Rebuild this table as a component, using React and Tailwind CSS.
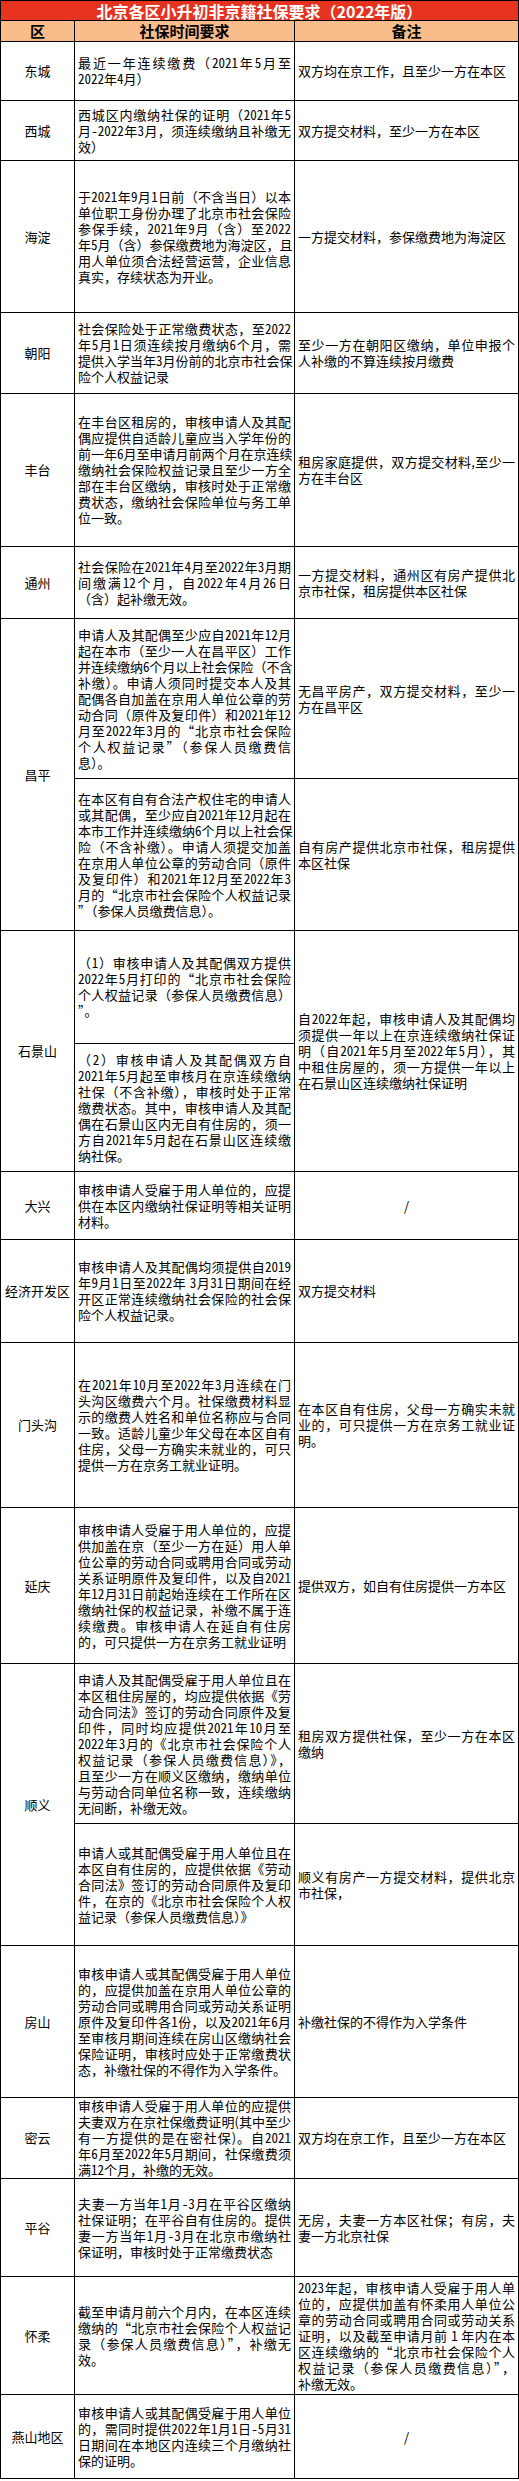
import React from "react";

// half-width digits/latin, like the original's 宋体 numbers; CJK punctuation stays full width
const half = (t) =>
  t.split(/([0-9A-Za-z\-.]+)/).map((p, i) =>
    /^[0-9A-Za-z\-.]+$/.test(p) ? (
      <span key={i} className="[font-feature-settings:'hwid']">{p}</span>
    ) : (
      p
    )
  );

// one line per array item; every line but the last is spread to the full cell width
const T = ({ l }) => (
  <div>
    {l.map((t, i) => (
      <div
        key={i}
        className={
          i < l.length - 1
            ? "whitespace-nowrap text-justify [text-align-last:justify]"
            : "whitespace-nowrap"
        }
      >
        {half(t)}
      </div>
    ))}
  </div>
);

const td = "border border-black px-[3px] py-0 align-middle text-[13px] leading-[16px] text-black overflow-hidden";
const name = "border border-black align-middle text-center text-[13px] leading-[16px] text-black";
const slash = "border border-black align-middle text-center text-[13px] text-black";

const App = () => {
  return (
    <div className="min-h-[2481px] bg-white font-['Noto_Sans_CJK_SC','Noto_Sans',sans-serif]">
      <table className="w-[518px] border-collapse table-fixed">
        <colgroup>
          <col className="w-[74px]" />
          <col className="w-[220px]" />
          <col className="w-[224px]" />
        </colgroup>
        <tbody>
          <tr className="h-[20px]">
            <td colSpan={3} className="border border-black bg-[#e6331f] text-center text-[16px] leading-[18px] font-bold text-white">
              北京各区小升初非京籍社保要求（2022年版）
            </td>
          </tr>
          <tr className="h-[21px] bg-[#f8bd8b]">
            <td className="border border-black text-center text-[15px] leading-[18px] font-bold text-black">区</td>
            <td className="border border-black text-center text-[15px] leading-[18px] font-bold text-black">社保时间要求</td>
            <td className="border border-black text-center text-[15px] leading-[18px] font-bold text-black">备注</td>
          </tr>

          <tr className="h-[59px]">
            <td className={name}>东城</td>
            <td className={td}><T l={["最近一年连续缴费（2021年5月至", "2022年4月）"]} /></td>
            <td className={td}><T l={["双方均在京工作，且至少一方在本区"]} /></td>
          </tr>

          <tr className="h-[60px]">
            <td className={name}>西城</td>
            <td className={td}><T l={["西城区内缴纳社保的证明（2021年5", "月-2022年3月，须连续缴纳且补缴无", "效）"]} /></td>
            <td className={td}><T l={["双方提交材料，至少一方在本区"]} /></td>
          </tr>

          <tr className="h-[152px]">
            <td className={name}>海淀</td>
            <td className={td}>
              <T
                l={[
                  "于2021年9月1日前（不含当日）以本",
                  "单位职工身份办理了北京市社会保险",
                  "参保手续，2021年9月（含）至2022",
                  "年5月（含）参保缴费地为海淀区，且",
                  "用人单位须合法经营运营，企业信息",
                  "真实，存续状态为开业。",
                ]}
              />
            </td>
            <td className={td}><T l={["一方提交材料，参保缴费地为海淀区"]} /></td>
          </tr>

          <tr className="h-[81px]">
            <td className={name}>朝阳</td>
            <td className={td}>
              <T
                l={[
                  "社会保险处于正常缴费状态，至2022",
                  "年5月1日须连续按月缴纳6个月，需",
                  "提供入学当年3月份前的北京市社会保",
                  "险个人权益记录",
                ]}
              />
            </td>
            <td className={td}><T l={["至少一方在朝阳区缴纳，单位申报个", "人补缴的不算连续按月缴费"]} /></td>
          </tr>

          <tr className="h-[153px]">
            <td className={name}>丰台</td>
            <td className={td}>
              <T
                l={[
                  "在丰台区租房的，审核申请人及其配",
                  "偶应提供自适龄儿童应当入学年份的",
                  "前一年6月至申请月前两个月在京连续",
                  "缴纳社会保险权益记录且至少一方全",
                  "部在丰台区缴纳，审核时处于正常缴",
                  "费状态，缴纳社会保险单位与务工单",
                  "位一致。",
                ]}
              />
            </td>
            <td className={td}><T l={["租房家庭提供，双方提交材料,至少一", "方在丰台区"]} /></td>
          </tr>

          <tr className="h-[72px]">
            <td className={name}>通州</td>
            <td className={td}>
              <T l={["社会保险在2021年4月至2022年3月期", "间缴满12个月，自2022年4月26日", "（含）起补缴无效。"]} />
            </td>
            <td className={td}><T l={["一方提交材料，通州区有房产提供北", "京市社保，租房提供本区社保"]} /></td>
          </tr>

          <tr className="h-[160px]">
            <td rowSpan={2} className={name}>昌平</td>
            <td className={td}>
              <T
                l={[
                  "申请人及其配偶至少应自2021年12月",
                  "起在本市（至少一人在昌平区）工作",
                  "并连续缴纳6个月以上社会保险（不含",
                  "补缴）。申请人须同时提交本人及其",
                  "配偶各自加盖在京用人单位公章的劳",
                  "动合同（原件及复印件）和2021年12",
                  "月至2022年3月的“北京市社会保险",
                  "个人权益记录”（参保人员缴费信",
                  "息）。",
                ]}
              />
            </td>
            <td className={td}><T l={["无昌平房产，双方提交材料，至少一", "方在昌平区"]} /></td>
          </tr>
          <tr className="h-[152px]">
            <td className={td}>
              <T
                l={[
                  "在本区有自有合法产权住宅的申请人",
                  "或其配偶，至少应自2021年12月起在",
                  "本市工作并连续缴纳6个月以上社会保",
                  "险（不含补缴）。申请人须提交加盖",
                  "在京用人单位公章的劳动合同（原件",
                  "及复印件）和2021年12月至2022年3",
                  "月的“北京市社会保险个人权益记录",
                  "”（参保人员缴费信息）。",
                ]}
              />
            </td>
            <td className={td}><T l={["自有房产提供北京市社保，租房提供", "本区社保"]} /></td>
          </tr>

          <tr className="h-[113px]">
            <td rowSpan={2} className={name}>石景山</td>
            <td className={td}>
              <T
                l={[
                  "（1）审核申请人及其配偶双方提供",
                  "2022年5月打印的“北京市社会保险",
                  "个人权益记录（参保人员缴费信息）",
                  "”。",
                ]}
              />
            </td>
            <td rowSpan={2} className={td}>
              <T
                l={[
                  "自2022年起，审核申请人及其配偶均",
                  "须提供一年以上在京连续缴纳社保证",
                  "明（自2021年5月至2022年5月），其",
                  "中租住房屋的，须一方提供一年以上",
                  "在石景山区连续缴纳社保证明",
                ]}
              />
            </td>
          </tr>
          <tr className="h-[128px]">
            <td className={td}>
              <T
                l={[
                  "（2）审核申请人及其配偶双方自",
                  "2021年5月起至审核月在京连续缴纳",
                  "社保（不含补缴），审核时处于正常",
                  "缴费状态。其中，审核申请人及其配",
                  "偶在石景山区内无自有住房的，须一",
                  "方自2021年5月起在石景山区连续缴",
                  "纳社保。",
                ]}
              />
            </td>
          </tr>

          <tr className="h-[68px]">
            <td className={name}>大兴</td>
            <td className={td}>
              <T l={["审核申请人受雇于用人单位的，应提", "供在本区内缴纳社保证明等相关证明", "材料。"]} />
            </td>
            <td className={slash}>/</td>
          </tr>

          <tr className="h-[103px]">
            <td className={name}>经济开发区</td>
            <td className={td}>
              <T
                l={[
                  "审核申请人及其配偶均须提供自2019",
                  "年9月1日至2022年 3月31日期间在经",
                  "开区正常连续缴纳社会保险的社会保",
                  "险个人权益记录。",
                ]}
              />
            </td>
            <td className={td}><T l={["双方提交材料"]} /></td>
          </tr>

          <tr className="h-[165px]">
            <td className={name}>门头沟</td>
            <td className={td}>
              <T
                l={[
                  "在2021年10月至2022年3月连续在门",
                  "头沟区缴费六个月。社保缴费材料显",
                  "示的缴费人姓名和单位名称应与合同",
                  "一致。适龄儿童少年父母在本区自有",
                  "住房，父母一方确实未就业的，可只",
                  "提供一方在京务工就业证明。",
                ]}
              />
            </td>
            <td className={td}>
              <T l={["在本区自有住房，父母一方确实未就", "业的，可只提供一方在京务工就业证", "明。"]} />
            </td>
          </tr>

          <tr className="h-[156px]">
            <td className={name}>延庆</td>
            <td className={td}>
              <T
                l={[
                  "审核申请人受雇于用人单位的，应提",
                  "供加盖在京（至少一方在延）用人单",
                  "位公章的劳动合同或聘用合同或劳动",
                  "关系证明原件及复印件，以及自2021",
                  "年12月31日前起始连续在工作所在区",
                  "缴纳社保的权益记录，补缴不属于连",
                  "续缴费。审核申请人在延自有住房",
                  "的，可只提供一方在京务工就业证明",
                ]}
              />
            </td>
            <td className={td}><T l={["提供双方，如自有住房提供一方本区"]} /></td>
          </tr>

          <tr className="h-[160px]">
            <td rowSpan={2} className={name}>顺义</td>
            <td className={td}>
              <T
                l={[
                  "申请人及其配偶受雇于用人单位且在",
                  "本区租住房屋的，均应提供依据《劳",
                  "动合同法》签订的劳动合同原件及复",
                  "印件，同时均应提供2021年10月至",
                  "2022年3月的《北京市社会保险个人",
                  "权益记录（参保人员缴费信息）》，",
                  "且至少一方在顺义区缴纳，缴纳单位",
                  "与劳动合同单位名称一致，连续缴纳",
                  "无间断，补缴无效。",
                ]}
              />
            </td>
            <td className={td}><T l={["租房双方提供社保，至少一方在本区", "缴纳"]} /></td>
          </tr>
          <tr className="h-[122px]">
            <td className={td}>
              <T
                l={[
                  "申请人或其配偶受雇于用人单位且在",
                  "本区自有住房的，应提供依据《劳动",
                  "合同法》签订的劳动合同原件及复印",
                  "件，在京的《北京市社会保险个人权",
                  "益记录（参保人员缴费信息）》",
                ]}
              />
            </td>
            <td className={td}><T l={["顺义有房产一方提交材料，提供北京", "市社保，"]} /></td>
          </tr>

          <tr className="h-[152px]">
            <td className={name}>房山</td>
            <td className={td}>
              <T
                l={[
                  "审核申请人或其配偶受雇于用人单位",
                  "的，应提供加盖在京用人单位公章的",
                  "劳动合同或聘用合同或劳动关系证明",
                  "原件及复印件各1份，以及2021年6月",
                  "至审核月期间连续在房山区缴纳社会",
                  "保险证明，审核时应处于正常缴费状",
                  "态，补缴社保的不得作为入学条件。",
                ]}
              />
            </td>
            <td className={td}><T l={["补缴社保的不得作为入学条件"]} /></td>
          </tr>

          <tr className="h-[80px]">
            <td className={name}>密云</td>
            <td className={td}>
              <T
                l={[
                  "审核申请人受雇于用人单位的应提供",
                  "夫妻双方在京社保缴费证明(其中至少",
                  "有一方提供的是在密社保)。自2021",
                  "年6月至2022年5月期间，社保缴费须",
                  "满12个月，补缴的无效。",
                ]}
              />
            </td>
            <td className={td}><T l={["双方均在京工作，且至少一方在本区"]} /></td>
          </tr>

          <tr className="h-[98px]">
            <td className={name}>平谷</td>
            <td className={td}>
              <T
                l={[
                  "夫妻一方当年1月-3月在平谷区缴纳",
                  "社保证明；在平谷自有住房的。提供",
                  "妻一方当年1月-3月在北京市缴纳社",
                  "保证明，审核时处于正常缴费状态",
                ]}
              />
            </td>
            <td className={td}><T l={["无房，夫妻一方本区社保；有房，夫", "妻一方北京社保"]} /></td>
          </tr>

          <tr className="h-[118px]">
            <td className={name}>怀柔</td>
            <td className={td}>
              <T
                l={[
                  "截至申请月前六个月内，在本区连续",
                  "缴纳的“北京市社会保险个人权益记",
                  "录（参保人员缴费信息）”，补缴无",
                  "效。",
                ]}
              />
            </td>
            <td className={td}>
              <T
                l={[
                  "2023年起，审核申请人受雇于用人单",
                  "位的，应提供加盖有怀柔用人单位公",
                  "章的劳动合同或聘用合同或劳动关系",
                  "证明，以及截至申请月前 1 年内在本",
                  "区连续缴纳的“北京市社会保险个人",
                  "权益记录（参保人员缴费信息）”，",
                  "补缴无效。",
                ]}
              />
            </td>
          </tr>

          <tr className="h-[84px]">
            <td className={name}>燕山地区</td>
            <td className={td}>
              <T
                l={[
                  "审核申请人或其配偶受雇于用人单位",
                  "的，需同时提供2022年1月1日-5月31",
                  "日期间在本地区内连续三个月缴纳社",
                  "保的证明。",
                ]}
              />
            </td>
            <td className={slash}>/</td>
          </tr>
        </tbody>
      </table>
    </div>
  );
};

export default App;
